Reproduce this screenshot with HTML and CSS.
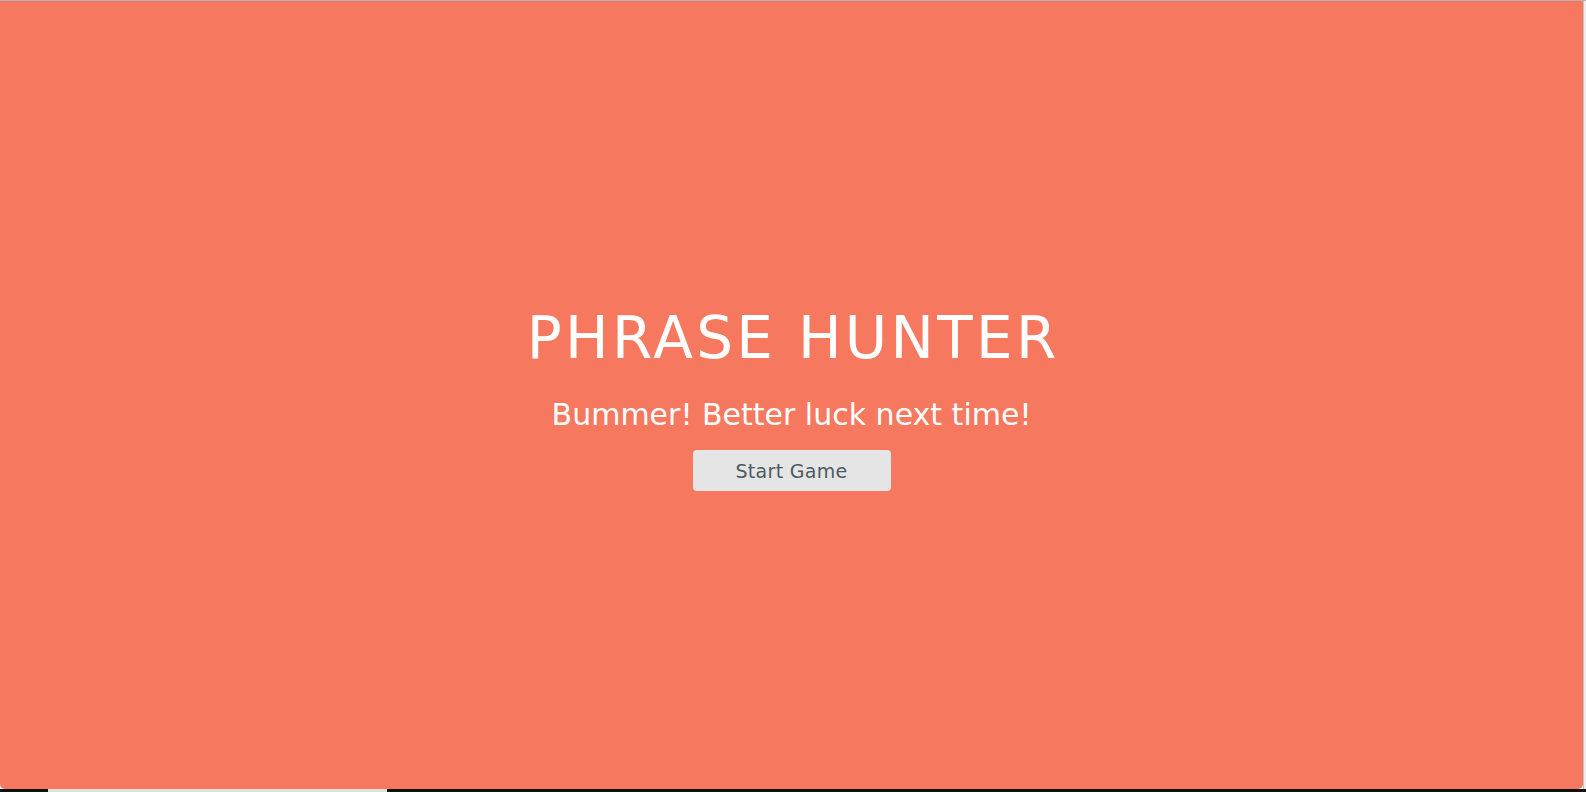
FILE: index.html
```html
<!DOCTYPE html>
<html lang="en">
<head>
<meta charset="utf-8">
<title>Phrase Hunter</title>
<link rel="stylesheet" href="styles.css">
</head>
<body>
<div class="frame">
  <div class="top-line"></div>
  <div class="row">
    <div class="overlay lose">
      <h2 class="title">PHRASE HUNTER</h2>
      <h1 class="game-over-message">Bummer! Better luck next time!</h1>
      <button class="btn-reset">Start Game</button>
    </div>
    <div class="side-strip"></div>
  </div>
  <div class="bottom-strip"><span class="seg"></span></div>
</div>
</body>
</html>
```

FILE: styles.css
```css
html, body {
  margin: 0;
  padding: 0;
  height: 100%;
  overflow: hidden;
  background: #f1f1f1;
}

.frame {
  display: flex;
  flex-direction: column;
  width: 1586px;
  height: 792px;
}

.top-line {
  height: 1px;
  background: #b3b3b3;
}

.row {
  display: flex;
  height: 788px;
}

.overlay {
  width: 1583px;
  height: 788px;
  box-sizing: border-box;
  padding-top: 10px;
  display: flex;
  flex-direction: column;
  align-items: center;
  justify-content: center;
  border-radius: 0 0 5px 5px;
  font-family: "DejaVu Sans", sans-serif;
  color: #fff;
}

.lose {
  background: #f5785f;
}

.side-strip {
  width: 3px;
  background: #ececec;
  border-left: 1px solid #c4c4c4;
  box-sizing: border-box;
}

.title {
  margin: 0;
  font-size: 58px;
  font-weight: normal;
  line-height: 1;
  letter-spacing: 3.3px;
  padding-left: 3.3px;
}

.game-over-message {
  margin: 33px 0 0;
  font-size: 30px;
  font-weight: normal;
  line-height: 1;
}

.btn-reset {
  margin-top: 20px;
  width: 198px;
  height: 41px;
  border: none;
  border-radius: 4px;
  background: #e5e5e5;
  color: #4d5a62;
  font-family: "DejaVu Sans", sans-serif;
  font-size: 19px;
  letter-spacing: 0.3px;
}

.bottom-strip {
  height: 3px;
  background: #111;
  display: flex;
}

.seg {
  margin-left: 48px;
  width: 339px;
  background: #e0e0e0;
}
```
